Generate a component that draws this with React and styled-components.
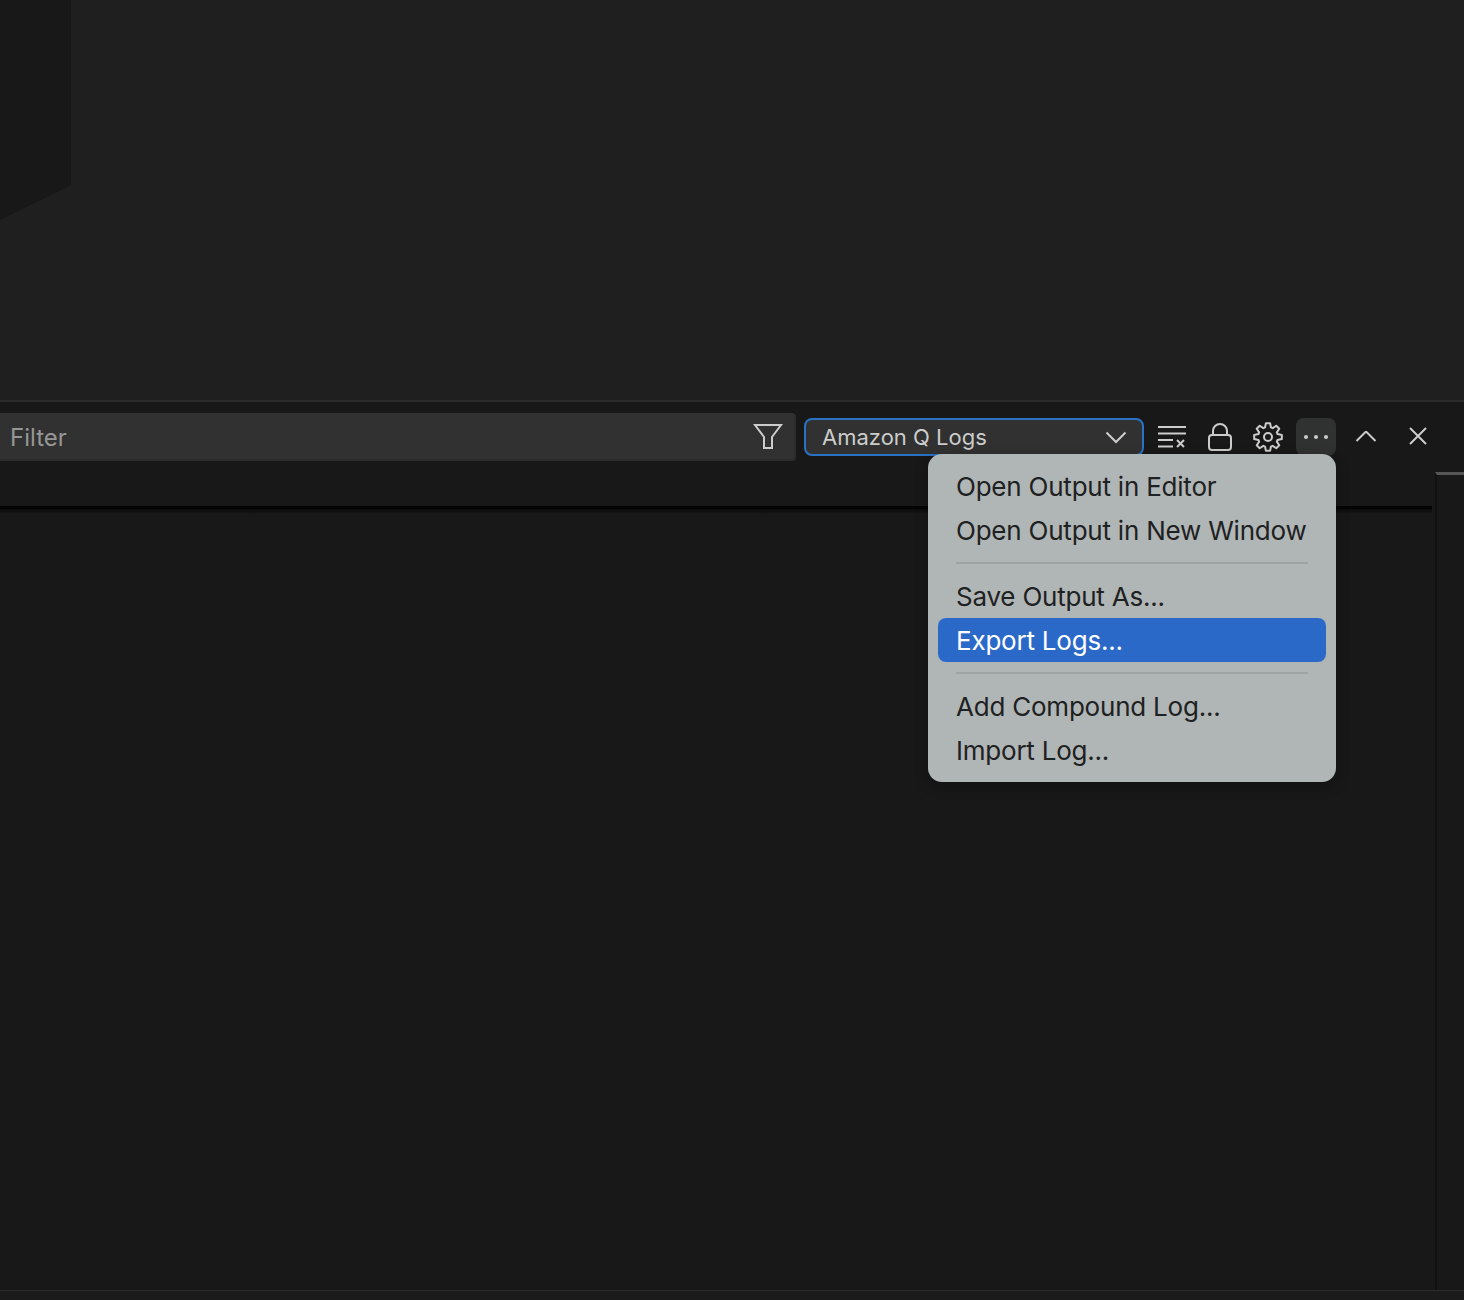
import styled, { createGlobalStyle } from 'styled-components';

const GlobalStyle = createGlobalStyle`
  html, body {
    margin: 0;
    padding: 0;
    background: #181818;
  }

  body {
    font-family: Inter, "Noto Sans", sans-serif;
  }
`;

const Page = styled.div`
  width: 1464px;
  height: 1300px;
  display: flex;
  flex-direction: column;
  overflow: hidden;
`;

const Editor = styled.div`
  height: 400px;
  flex: none;
  background: #1f1f1f;
  border-bottom: 2px solid #2b2b2b;
`;

const Watermark = styled.svg`
  display: block;
`;

const Panel = styled.div`
  flex: 1;
  min-height: 0;
  display: flex;
  flex-direction: column;
  background: #181818;
`;

const Toolbar = styled.div`
  position: relative;
  height: 104px;
  flex: none;
  box-sizing: border-box;
  padding-top: 11px;
  display: flex;
  align-items: flex-start;
`;

const Controls = styled.div`
  height: 48px;
  display: flex;
  align-items: center;
`;

const FilterBox = styled.div`
  width: 796px;
  height: 48px;
  box-sizing: border-box;
  padding: 2px 11px 0 10px;
  display: flex;
  align-items: center;
  justify-content: space-between;
  background: #313131;
  border-bottom: 2px solid #2c2c2c;
  border-right: 2px solid #2c2c2c;
  border-radius: 0 4px 4px 0;
  color: #969696;
  font-size: 24px;
`;

const OutputSelect = styled.div`
  width: 340px;
  height: 38px;
  margin-left: 8px;
  box-sizing: border-box;
  padding: 0 15px 0 16px;
  display: flex;
  align-items: center;
  justify-content: space-between;
  background: #313131;
  border: 2px solid #2a72c4;
  border-radius: 8px;
  color: #cccccc;
  font-size: 22px;
`;

const IconButton = styled.div`
  width: 40px;
  height: 38px;
  margin-left: ${({ $gap }) => $gap}px;
  display: flex;
  align-items: center;
  justify-content: center;
  border-radius: 8px;
  background: ${({ $active }) => ($active ? '#303231' : 'transparent')};
`;

const Glyph = styled.svg`
  display: block;
  fill: none;
  stroke: #cccccc;
  stroke-width: 2;
`;

const Menu = styled.div`
  position: absolute;
  left: 928px;
  top: 52px;
  width: 408px;
  height: 328px;
  box-sizing: border-box;
  padding: 10px;
  background: #b0b5b5;
  border-radius: 14px;
  box-shadow: 0 4px 14px rgba(0, 0, 0, 0.3);
  z-index: 2;
`;

const MenuItem = styled.div`
  height: 44px;
  padding-left: 18px;
  display: flex;
  align-items: center;
  border-radius: 8px;
  font-size: 26px;
  letter-spacing: -0.22px;
  color: ${({ $selected }) => ($selected ? '#ffffff' : '#1e2122')};
  background: ${({ $selected }) => ($selected ? '#2b69c9' : 'transparent')};
`;

const MenuDivider = styled.div`
  height: 2px;
  margin: 10px 18px;
  background: #9ea3a3;
`;

const Body = styled.div`
  flex: 1;
  min-height: 0;
  display: flex;
`;

const Content = styled.div`
  flex: 1;
  border-top: 3px solid #050505;
  margin-right: 3px;
  height: 5px;
  background: linear-gradient(#0a0a0a, #181818);
`;

const Gutter = styled.div`
  width: 27px;
  margin-top: -34px;
  border-left: 2px solid #111111;
  border-top: 3px solid #555555;
  z-index: 1;
`;

const Footer = styled.div`
  height: 9px;
  flex: none;
  background: #1b1b1b;
  border-top: 1px solid #2b2b2b;
`;

const menuGroups = [
  [{ label: 'Open Output in Editor' }, { label: 'Open Output in New Window' }],
  [{ label: 'Save Output As...' }, { label: 'Export Logs...', selected: true }],
  [{ label: 'Add Compound Log...' }, { label: 'Import Log...' }],
];

// eight flat teeth, one of them straight up
const gearPoints = Array.from({ length: 8 }, (_, i) => {
  const angle = (i * Math.PI) / 4 - Math.PI / 2;
  return [[10, -0.3], [14, -0.15], [14, 0.15], [10, 0.3]]
    .map(([r, d]) => `${(15 + r * Math.cos(angle + d)).toFixed(2)},${(15 + r * Math.sin(angle + d)).toFixed(2)}`)
    .join(' ');
}).join(' ');

const App = () => (
  <>
    <GlobalStyle />
    <Page>
      <Editor>
        <Watermark width="71" height="221" viewBox="0 0 71 221">
          <polygon points="0,0 71,0 71,185 0,220" fill="#181818" />
        </Watermark>
      </Editor>
      <Panel>
        <Toolbar>
          <Controls>
            <FilterBox>
              Filter
              <Glyph width="30" height="28" viewBox="0 0 30 28">
                <path d="M2 2h26L19 14v11h-8V14z" />
              </Glyph>
            </FilterBox>
            <OutputSelect>
              Amazon Q Logs
              <Glyph width="22" height="14" viewBox="0 0 22 14">
                <path d="M1.5 2.5 11 12l9.500-9.500" />
              </Glyph>
            </OutputSelect>
            <IconButton $gap={8}>
              <Glyph width="30" height="24" viewBox="0 0 30 24">
                <path d="M1 2h28M1 8.500h28M1 15h15M1 21.500h15M20 15l7 7M27 15l-7 7" />
              </Glyph>
            </IconButton>
            <IconButton $gap={8}>
              <Glyph width="26" height="30" viewBox="0 0 26 30">
                <rect x="2" y="13" width="22" height="15" rx="3" />
                <path d="M6 13V9a7 7 0 0 1 14 0v4" />
              </Glyph>
            </IconButton>
            <IconButton $gap={8}>
              <Glyph width="30" height="30" viewBox="0 0 30 30">
                <circle cx="15" cy="15" r="4" />
                <polygon points={gearPoints} strokeLinejoin="round" />
              </Glyph>
            </IconButton>
            <IconButton $gap={8} $active>
              <Glyph width="26" height="6" viewBox="0 0 26 6">
                <circle cx="3" cy="3" r="2" fill="#cccccc" stroke="none" />
                <circle cx="13" cy="3" r="2" fill="#cccccc" stroke="none" />
                <circle cx="23" cy="3" r="2" fill="#cccccc" stroke="none" />
              </Glyph>
            </IconButton>
            <IconButton $gap={10}>
              <Glyph width="22" height="13" viewBox="0 1.500 22 13">
                <path d="M1.500 11.500 11 2l9.500 9.500" />
              </Glyph>
            </IconButton>
            <IconButton $gap={12}>
              <Glyph width="20" height="20" viewBox="0 1 20 20">
                <path d="M2 2l16 16M18 2 2 18" />
              </Glyph>
            </IconButton>
          </Controls>
          <Menu>
            {menuGroups.map((group, index) => (
              <div key={group[0].label}>
                {index > 0 && <MenuDivider />}
                {group.map(item => (
                  <MenuItem key={item.label} $selected={item.selected}>{item.label}</MenuItem>
                ))}
              </div>
            ))}
          </Menu>
        </Toolbar>
        <Body>
          <Content />
          <Gutter />
        </Body>
        <Footer />
      </Panel>
    </Page>
  </>
);

export default App;
